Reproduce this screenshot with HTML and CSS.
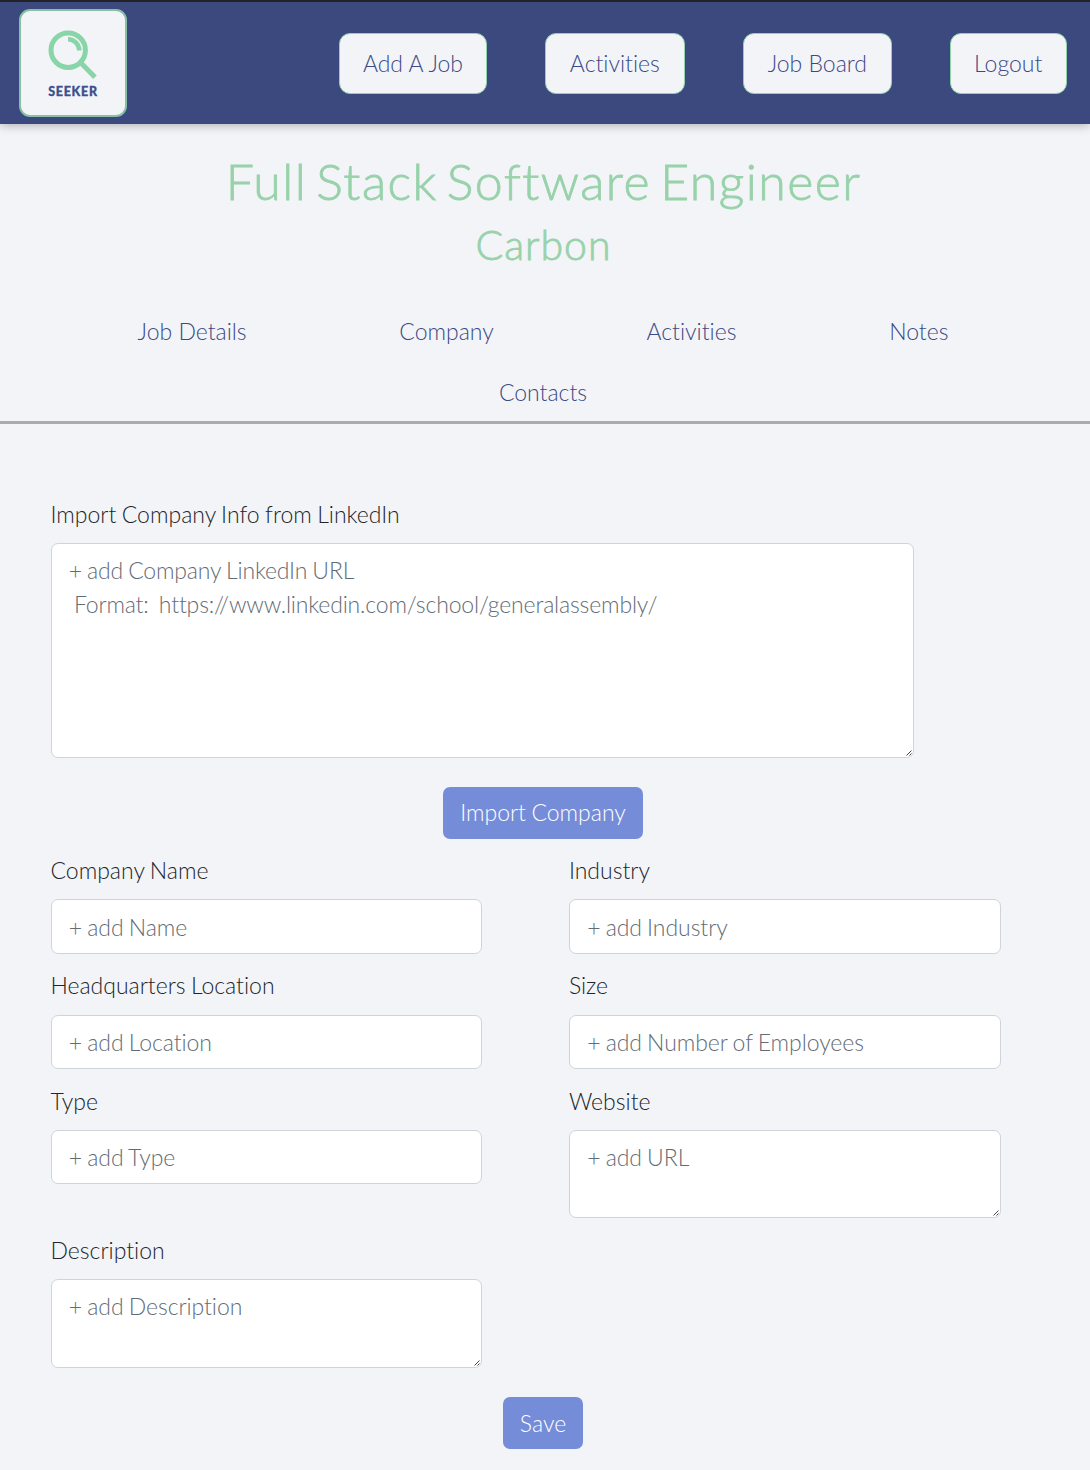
FILE: index.html
```html
<!DOCTYPE html>
<html lang="en">
<head>
<meta charset="utf-8">
<title>Seeker - Company</title>
<link rel="stylesheet" href="styles.css">
</head>
<body>
<header class="navbar">
  <a class="logo">
    <svg class="logo-icon" viewBox="0 0 50 50" width="50" height="50" fill="none" stroke="#88d5a8">
      <circle cx="20.2" cy="20.2" r="17.2" stroke-width="5"/>
      <path d="M20 9.2A11.3 11.3 0 0 1 31.3 20.5" stroke-width="4.6"/>
      <path d="M32.3 32.3L47 47.2" stroke-width="5"/>
    </svg>
    <span class="logo-name">SEEKER</span>
  </a>
  <nav class="nav-links">
    <a class="nav-button w-add">Add A Job</a>
    <a class="nav-button w-activities">Activities</a>
    <a class="nav-button w-board">Job Board</a>
    <a class="nav-button w-logout">Logout</a>
  </nav>
</header>
<section class="heading">
  <h1 class="job-title">Full Stack Software Engineer</h1>
  <h2 class="company">Carbon</h2>
</section>
<nav class="tabs">
  <a>Job Details</a><a>Company</a><a>Activities</a><a>Notes</a><a>Contacts</a>
</nav>
<main class="content">
  <form class="import-form">
    <label class="label" for="import">Import Company Info from LinkedIn</label>
    <div class="area area-import"><textarea id="import" class="control" placeholder="+ add Company LinkedIn URL
 Format:  https://www.linkedin.com/school/generalassembly/"></textarea><svg class="grip" viewBox="0 0 6 6"><path d="M0.5 5.5L5.5 0.5M3.5 5.5L5.5 3.5"/></svg></div>
    <button type="button" class="submit">Import Company</button>
  </form>
  <form class="company-form">
    <div class="fields">
      <div><label class="label" for="name">Company Name</label><input id="name" class="control" placeholder="+ add Name"></div>
      <div><label class="label" for="industry">Industry</label><input id="industry" class="control" placeholder="+ add Industry"></div>
      <div><label class="label" for="location">Headquarters Location</label><input id="location" class="control" placeholder="+ add Location"></div>
      <div><label class="label" for="size">Size</label><input id="size" class="control" placeholder="+ add Number of Employees"></div>
      <div><label class="label" for="type">Type</label><input id="type" class="control" placeholder="+ add Type"></div>
      <div><label class="label" for="website">Website</label><div class="area"><textarea id="website" class="control" placeholder="+ add URL"></textarea><svg class="grip" viewBox="0 0 6 6"><path d="M0.5 5.5L5.5 0.5M3.5 5.5L5.5 3.5"/></svg></div></div>
      <div><label class="label" for="description">Description</label><div class="area"><textarea id="description" class="control" placeholder="+ add Description"></textarea><svg class="grip" viewBox="0 0 6 6"><path d="M0.5 5.5L5.5 0.5M3.5 5.5L5.5 3.5"/></svg></div></div>
    </div>
    <button type="button" class="submit">Save</button>
  </form>
</main>
</body>
</html>
```
FILE: styles.css
```css
* { box-sizing: border-box; }
body {
  margin: 0;
  min-height: 1470px;
  background: #f3f4f8;
  color: #212529;
  font: 300 23px/34.6px Lato, sans-serif;
  font-variant-ligatures: none;
}
.navbar {
  display: flex;
  justify-content: space-between;
  align-items: center;
  height: 124px;
  padding: 0 23px 0 19px;
  background: #3b497f;
  border-top: 2px solid #222326;
  box-shadow: 0 1px 10px rgba(0, 0, 0, .3);
}
.logo {
  display: flex;
  flex-direction: column;
  align-items: center;
  width: 108px;
  height: 108px;
  padding-top: 19px;
  border: 2px solid #88bfa5;
  border-radius: 11px;
  background: #f3f4f8;
}
.logo-icon { display: block; }
.logo-name {
  color: #3b4f8c;
  font: 900 12.5px/14px Lato, sans-serif;
  letter-spacing: .7px;
  margin-top: 5px;
  -webkit-text-stroke: .3px #3b4f8c;
}
.nav-links { display: flex; gap: 57.7px; }
.nav-button {
  height: 61px;
  border: 1.5px solid #93d2a8;
  border-radius: 11px;
  background: #f3f4f8;
  color: #3b4a85;
  line-height: 59px;
  text-align: center;
}
.w-add { width: 148px; }
.w-activities { width: 140.5px; }
.w-board { width: 149px; }
.w-logout { width: 117.5px; }
.heading { width: 1087px; padding-top: 27px; text-align: center; color: #98d2aa; }
.heading h1, .heading h2 { margin: 0; font-weight: 300; -webkit-text-stroke: .8px #98d2aa; }
.heading .job-title { font-size: 50px; line-height: 60px; letter-spacing: 1.45px; word-spacing: -6px; }
.heading .company { margin-top: 9px; font-size: 41px; line-height: 50px; letter-spacing: 1px; }
.tabs {
  display: flex;
  flex-wrap: wrap;
  justify-content: center;
  align-content: flex-start;
  gap: 26.6px 152.7px;
  height: 154px;
  padding: 44px 64px 0 60px;
  border-bottom: 3px solid #aaabad;
  color: #3b4a85;
}
.content { width: 1086px; padding: 72.5px 0 0 50.5px; }
.import-form, .company-form { display: flex; flex-direction: column; }
.label { display: block; margin-bottom: 11.5px; word-spacing: -.8px; }
.control {
  display: block;
  width: 100%;
  height: 54.5px;
  padding: 8.6px 17.3px;
  border: 1.5px solid #ced4da;
  border-radius: 7px;
  background: #fff;
  color: #495057;
  font: inherit;
  font-variant-ligatures: none;
  letter-spacing: -.06px;
  word-spacing: -1px;
  resize: none;
  overflow: hidden;
}
textarea.control { padding-top: 9px; }
.control::placeholder { color: #636c75; opacity: 1; }
.area { position: relative; height: 88.7px; }
.area .control { height: 100%; }
.area-import { width: 863.5px; height: 215px; }
.area-import .control { letter-spacing: -.16px; }
.grip { position: absolute; right: 2px; bottom: 2px; width: 6px; height: 6px; stroke: #444; stroke-width: 1; }
.submit {
  align-self: center;
  height: 51.7px;
  margin-top: 29.3px;
  margin-left: -50.5px;
  padding: 0 17px;
  border: 0;
  border-radius: 7px;
  background: #758cd9;
  color: #fff;
  font: inherit;
  word-spacing: -.8px;
}
.company-form { margin-top: 14.7px; }
.fields { display: grid; grid-template-columns: 431.7px 431.7px; column-gap: 86.7px; row-gap: 14.6px; }
```
